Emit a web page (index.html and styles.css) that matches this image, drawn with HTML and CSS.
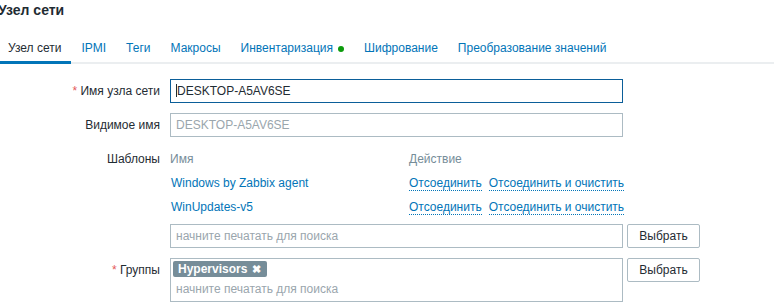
FILE: index.html
```html
<!DOCTYPE html>
<html lang="ru">
<head>
<meta charset="utf-8">
<title>Узел сети</title>
<link rel="stylesheet" href="styles.css">
</head>
<body>
<div class="dialog">
  <h4 class="title">Узел сети</h4>
  <ul class="tabs">
    <li><a class="tab active">Узел сети</a></li>
    <li><a class="tab">IPMI</a></li>
    <li><a class="tab">Теги</a></li>
    <li><a class="tab">Макросы</a></li>
    <li><a class="tab">Инвентаризация<span class="dot"></span></a></li>
    <li><a class="tab">Шифрование</a></li>
    <li><a class="tab">Преобразование значений</a></li>
  </ul>
  <div class="form">
    <div class="label"><span class="req">*</span> Имя узла сети</div>
    <div class="field"><div class="input focused"><span class="caret"></span>DESKTOP-A5AV6SE</div></div>

    <div class="label">Видимое имя</div>
    <div class="field"><div class="input placeholder">DESKTOP-A5AV6SE</div></div>

    <div class="label">Шаблоны</div>
    <div class="field">
      <div class="tpl-table">
        <div class="th">Имя</div><div class="th">Действие</div>
        <div class="td"><a class="link">Windows by Zabbix agent</a></div>
        <div class="td"><span class="action">Отсоединить</span><span class="action">Отсоединить и очистить</span></div>
        <div class="td"><a class="link">WinUpdates-v5</a></div>
        <div class="td"><span class="action">Отсоединить</span><span class="action">Отсоединить и очистить</span></div>
      </div>
      <div class="select-row">
        <div class="input placeholder">начните печатать для поиска</div>
        <button class="btn">Выбрать</button>
      </div>
    </div>

    <div class="label"><span class="req">*</span> Группы</div>
    <div class="field">
      <div class="select-row">
        <div class="multiselect">
          <div class="tags"><span class="tag">Hypervisors<span class="tag-x">✖</span></span></div>
          <div class="ms-input">начните печатать для поиска</div>
        </div>
        <button class="btn">Выбрать</button>
      </div>
    </div>
  </div>
</div>
</body>
</html>
```

FILE: styles.css
```css
html, body {
  margin: 0;
  padding: 0;
  background: #ffffff;
  overflow: hidden;
}
body {
  font-family: "Liberation Sans", Arial, sans-serif;
  font-size: 12px;
  color: #1f2c33;
}
.dialog {
  margin-left: -2px;
  width: 790px;
}
.title {
  margin: 3px 0 0 0;
  font-size: 14px;
  line-height: 14px;
  font-weight: bold;
  color: #1f2c33;
}
.tabs {
  list-style: none;
  margin: 16px 0 0 0;
  padding: 0;
  display: flex;
  border-bottom: 2px solid #ebeef0;
}
.tabs li {
  display: block;
}
.tab {
  display: flex;
  align-items: center;
  padding: 8px 10px 6px 10px;
  line-height: 14px;
  color: #0275b8;
  border-bottom: 3px solid transparent;
  margin-bottom: -2px;
}
.tab.active {
  color: #1f2c33;
  border-bottom-color: #0275b8;
}
.dot {
  display: inline-block;
  width: 6px;
  height: 6px;
  border-radius: 50%;
  background: #0c9b0c;
  margin-left: 5px;
  margin-top: 1px;
}
.form {
  padding-top: 15px;
  display: grid;
  grid-template-columns: 172px 530px;
  row-gap: 10px;
}
.label {
  text-align: right;
  padding-right: 10px;
  line-height: 24px;
  height: 24px;
  white-space: nowrap;
}
.req {
  color: #e45959;
}
.field {
  min-width: 0;
}
.input {
  box-sizing: border-box;
  width: 453px;
  height: 24px;
  border: 1px solid #acbbc3;
  padding: 0 5px;
  line-height: 22px;
  white-space: nowrap;
  background: #fff;
  color: #1f2c33;
}
.input.focused {
  border-color: #0b5e99;
}
.caret {
  display: inline-block;
  width: 1px;
  height: 13px;
  background: #1f2c33;
  vertical-align: -2px;
}
.placeholder {
  color: #9aa6ad;
}
.tpl-table {
  display: grid;
  grid-template-columns: 239px 214px;
  grid-auto-rows: 24px;
  margin-bottom: 5px;
}
.th, .td {
  line-height: 24px;
  white-space: nowrap;
}
.th {
  color: #768d99;
}
.td:nth-child(odd) {
  padding-left: 1px;
}
.link {
  color: #0275b8;
}
.action {
  color: #0275b8;
  border-bottom: 1px dotted #0275b8;
  margin-right: 7px;
}
.select-row {
  display: flex;
  align-items: flex-start;
  gap: 4px;
}
.select-row .input, .multiselect {
  flex: 0 0 453px;
}
.btn {
  flex: 0 0 73px;
  box-sizing: border-box;
  width: 73px;
  height: 24px;
  padding: 0;
  border: 1px solid #acbbc3;
  border-radius: 2px;
  background: #ffffff;
  color: #1f2c33;
  font-family: "Liberation Sans", Arial, sans-serif;
  font-size: 12px;
  line-height: 22px;
}
.multiselect {
  box-sizing: border-box;
  width: 453px;
  height: 44px;
  border: 1px solid #acbbc3;
  padding: 2px 2px 2px 2px;
}
.tags {
  display: flex;
  height: 16px;
  margin-bottom: 2px;
}
.tag {
  display: inline-flex;
  align-items: center;
  height: 16px;
  padding: 0 6px 0 5px;
  background: #768d99;
  border-radius: 2px;
  color: #ffffff;
  font-weight: bold;
  line-height: 16px;
}
.tag-x {
  margin-left: 5px;
  font-size: 11px;
}
.ms-input {
  height: 20px;
  line-height: 20px;
  padding-left: 3px;
  color: #9aa6ad;
  white-space: nowrap;
}
```
